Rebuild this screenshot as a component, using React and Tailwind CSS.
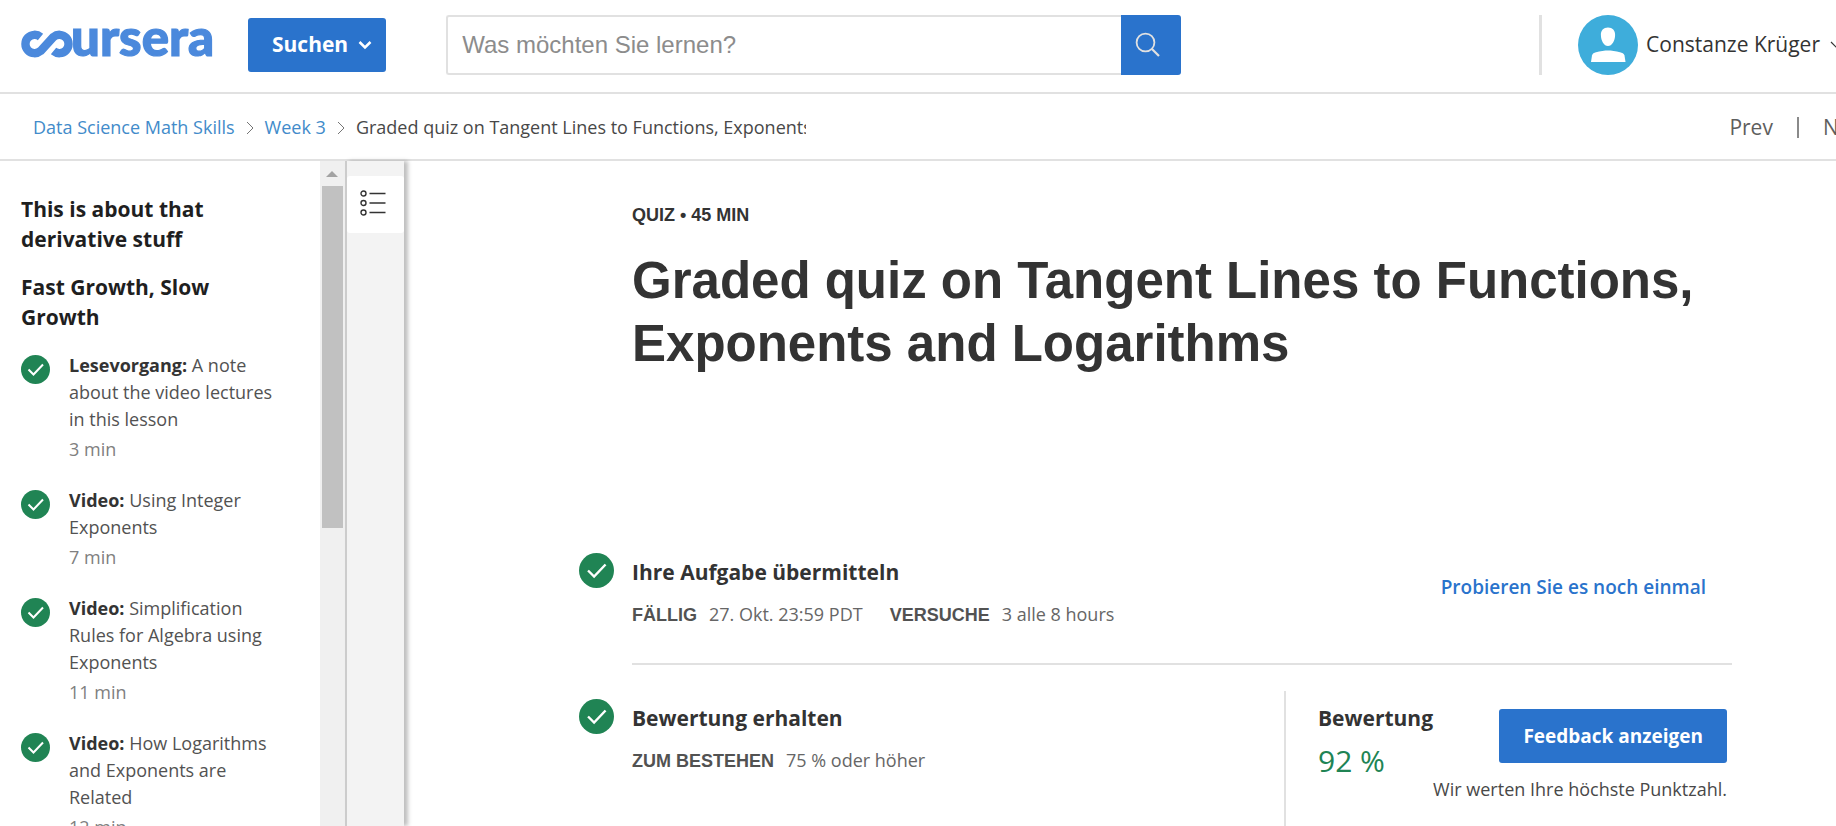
import React from "react";

const lessons = [
  { kind: "Lesevorgang:", title: "A note about the video lectures in this lesson", time: "3 min" },
  { kind: "Video:", title: "Using Integer Exponents", time: "7 min" },
  { kind: "Video:", title: "Simplification Rules for Algebra using Exponents", time: "11 min" },
  { kind: "Video:", title: "How Logarithms and Exponents are Related", time: "12 min" },
];

function CheckCircle({ className }) {
  return (
    <svg viewBox="0 0 29 29" className={className} aria-hidden="true">
      <circle cx="14.5" cy="14.5" r="14.5" fill="#208454" />
      <path d="M7.5 14.5 L12.5 19.5 L22 9.5" fill="none" stroke="#fff" strokeWidth="2" />
    </svg>
  );
}

function ChevronRight() {
  return (
    <svg viewBox="0 0 8 14" className="h-3.5 w-2 shrink-0" aria-hidden="true">
      <path d="M1 1 L7 7 L1 13" fill="none" stroke="#757575" strokeWidth="1" />
    </svg>
  );
}

function Logo() {
  return (
    <a href="#home" aria-label="coursera" className="shrink-0 text-[#4b89dc]">
      <svg viewBox="0 0 192 30" className="h-[30px] w-48 overflow-visible" aria-hidden="true">
        <path
          d="M20.500 6.900 A9.200 9.200 0 1 0 20.500 21.100 L33.500 6.900 A9.200 9.200 0 1 1 33.500 21.100"
          fill="none"
          stroke="currentColor"
          strokeWidth="8.4"
        />
        <text x="51" y="26" fill="currentColor" stroke="currentColor" strokeWidth="1.2" className="font-['Lato',sans-serif] text-[51px] font-black">
          ursera
        </text>
      </svg>
    </a>
  );
}

function Header() {
  return (
    <header className="flex h-[94px] shrink-0 items-center overflow-hidden border-b-2 border-[#e1e1e1] pb-0.5 pl-5">
      <Logo />
      <button type="button" className="ml-9 flex h-[54px] shrink-0 items-center gap-2.5 rounded-[3px] bg-[#2a73cc] px-6 pr-3.5 text-[21px] font-bold text-white">
        Suchen
        <svg viewBox="0 0 14 10" className="h-2.5 w-3.5" aria-hidden="true">
          <path d="M1.500 2 L7 7.500 L12.500 2" fill="none" stroke="currentColor" strokeWidth="2.500" />
        </svg>
      </button>
      <form className="ml-15 flex h-[60px] w-[735px]" onSubmit={(e) => e.preventDefault()}>
        <input
          type="text"
          aria-label="Was möchten Sie lernen?"
          placeholder="Was möchten Sie lernen?"
          className="min-w-0 flex-1 rounded-l-[3px] border-2 border-r-0 border-[#e1e1e1] px-3.5 font-['Liberation_Sans',sans-serif] text-[24px] text-[#333] outline-none placeholder:text-[#8c8c8c]"
        />
        <button type="submit" aria-label="Suchen" className="flex w-[60px] items-center justify-center rounded-r-[3px] bg-[#2a73cc] text-[#e1e1e1]">
          <svg viewBox="0 0 26 26" className="mr-1.5 size-[26px]" aria-hidden="true">
            <circle cx="10.500" cy="10.500" r="8.900" fill="none" stroke="currentColor" strokeWidth="1.800" />
            <path d="M17 17 L24 24" stroke="currentColor" strokeWidth="2.200" />
          </svg>
        </button>
      </form>
      <div className="-mr-2 ml-auto flex shrink-0 items-center">
        <div className="mr-9 h-[60px] w-[3px] bg-[#e1e1e1]" />
        <button type="button" className="flex items-center text-[21px] text-[#333]">
          <svg viewBox="0 0 60 60" className="mr-2 size-[60px]" aria-hidden="true">
            <circle cx="30" cy="30" r="30" fill="#3eaddb" />
            <path d="M30 12.500 C34.500 12.500 37.300 15.500 37.100 20 C37 26 34 31 30 31 C26 31 23 26 22.900 20 C22.700 15.500 25.500 12.500 30 12.500 Z" fill="#fff" />
            <path d="M13 47 L14 40.500 C14.500 38.500 16 37.700 18 37.200 C22 36.200 27 35.500 30 35.500 C33 35.500 38 36.200 42 37.200 C44 37.700 46 38.500 46.500 40.500 L47.500 47 Z" fill="#fff" />
          </svg>
          Constanze Krüger
          <svg viewBox="0 0 14 8" className="ml-2.5 h-2 w-3.5" aria-hidden="true">
            <path d="M1 1 L7 7 L13 1" fill="none" stroke="currentColor" strokeWidth="1.200" />
          </svg>
        </button>
      </div>
    </header>
  );
}

function Breadcrumbs() {
  return (
    <div className="flex h-[67px] shrink-0 items-center overflow-hidden border-b-2 border-[#e1e1e1] pt-0.5 pl-[33px] whitespace-nowrap">
      <nav aria-label="Breadcrumb" className="flex items-center gap-[11px] text-[18px] text-[#484848]">
        <a href="#course" className="text-[#428bca]">Data Science Math Skills</a>
        <ChevronRight />
        <a href="#week-3" className="text-[#428bca]">Week 3</a>
        <ChevronRight />
        <span className="w-[450px] overflow-hidden">Graded quiz on Tangent Lines to Functions, Exponents and Logarithms</span>
      </nav>
      <div className="-mr-[33px] ml-auto flex shrink-0 items-center gap-6 text-[21px] text-[#5e5e5e]">
        <a href="#prev">Prev</a>
        <div className="h-[21px] w-0.5 bg-[#8a8a8a]" />
        <a href="#next">Next</a>
      </div>
    </div>
  );
}

function Sidebar() {
  return (
    <aside className="flex shrink-0">
      <div className="w-[320px] overflow-hidden pt-[33px] pr-10 pl-[21px]">
        <h2 className="mb-[18px] text-[21px] leading-[30px] font-bold text-[#1f1f1f]">This is about that derivative stuff</h2>
        <h2 className="mb-5 text-[21px] leading-[30px] font-bold text-[#1f1f1f]">Fast Growth, Slow Growth</h2>
        <ul className="flex flex-col gap-6 text-[18px] leading-[27px]">
          {lessons.map((l) => (
            <li key={l.title}>
              <a href="#lesson" className="flex items-start gap-[19px]">
                <CheckCircle className="mt-[3px] size-[29px] shrink-0" />
                <span className="flex flex-col gap-[3px] text-[#525252]">
                  <span>
                    <strong className="font-bold text-[#333]">{l.kind}</strong> {l.title}
                  </span>
                  <span className="text-[#808080]">{l.time}</span>
                </span>
              </a>
            </li>
          ))}
        </ul>
      </div>
      <div className="flex w-[25px] flex-col items-center bg-[#f0f0f0] pr-px" aria-hidden="true">
        <svg viewBox="0 0 12 6" className="mt-2.5 mb-[9px] h-1.5 w-3">
          <path d="M0 6 L6 0 L12 6 Z" fill="#a3a3a3" />
        </svg>
        <div className="h-[342px] w-[21px] bg-[#c1c1c1]" />
      </div>
      <div className="w-[59px] border-l-2 border-[#ccc] bg-[#f3f3f3] pt-[15px] shadow-[4px_0_4px_rgba(0,0,0,0.25)]">
        <button type="button" aria-label="Menü" className="flex h-[57px] w-full items-center justify-center rounded-[3px] bg-white pr-1.5 pb-1">
          <svg viewBox="0 0 26 26" className="size-[26px]" fill="none" stroke="#333" aria-hidden="true">
            <g strokeWidth="1.400">
              <circle cx="3.500" cy="3.500" r="2.500" />
              <circle cx="3.500" cy="13" r="2.500" />
              <circle cx="3.500" cy="22.500" r="2.500" />
            </g>
            <path d="M9.500 3.500 H25.500 M9.500 13 H25.500 M9.500 22.500 H25.500" strokeWidth="1.400" />
          </svg>
        </button>
      </div>
    </aside>
  );
}

function Label({ children }) {
  return <span className="font-['Liberation_Sans',sans-serif] text-[18px] font-bold text-[#525252]">{children}</span>;
}

function Main() {
  return (
    <main className="min-w-0 flex-1 overflow-hidden pt-[41px] pr-[104px] pl-[175px]">
      <div className="pl-[53px] font-['Liberation_Sans',sans-serif] font-bold text-[#333]">
        <p className="text-[18px] leading-[27px]">QUIZ • 45 MIN</p>
        <h1 className="mt-5 text-[51px] leading-[63px]">Graded quiz on Tangent Lines to Functions, Exponents and Logarithms</h1>
      </div>

      <section className="mt-[178px] flex">
        <CheckCircle className="mr-[18px] size-[35px] shrink-0" />
        <div className="flex h-[112px] flex-1 items-start border-b-2 border-[#e1e1e1]">
          <div className="pt-1">
            <h3 className="text-[21px] leading-[30px] font-bold text-[#333]">Ihre Aufgabe übermitteln</h3>
            <p className="mt-3.5 flex items-baseline gap-[27px] text-[18px] leading-[27px] text-[#666]">
              <span className="flex items-baseline gap-3"><Label>FÄLLIG</Label>27. Okt. 23:59 PDT</span>
              <span className="flex items-baseline gap-3"><Label>VERSUCHE</Label>3 alle 8 hours</span>
            </p>
          </div>
          <button type="button" className="mt-5 mr-[26px] ml-auto text-[19px] leading-7 font-semibold text-[#2a73cc]">Probieren Sie es noch einmal</button>
        </div>
      </section>

      <section className="flex pt-[26px]">
        <CheckCircle className="mt-2 mr-[18px] size-[35px] shrink-0" />
        <div className="flex flex-1">
          <div className="flex-1 pt-3">
            <h3 className="text-[21px] leading-[30px] font-bold text-[#333]">Bewertung erhalten</h3>
            <p className="mt-3.5 flex items-baseline gap-3 text-[18px] leading-[27px] text-[#666]">
              <Label>ZUM BESTEHEN</Label>75 % oder höher
            </p>
          </div>
          <div className="flex h-[180px] w-[448px] border-l-2 border-[#e1e1e1] pr-[5px] pl-8">
            <div className="w-0 pt-3 whitespace-nowrap">
              <h3 className="text-[21px] leading-[30px] font-bold text-[#333]">Bewertung</h3>
              <p className="text-[30px] leading-[56px] text-[#208454]">92 %</p>
            </div>
            <div className="ml-auto flex flex-col items-end pt-[18px]">
              <button type="button" className="h-[54px] rounded-[3px] bg-[#2a73cc] px-6 text-[19px] font-bold text-white">Feedback anzeigen</button>
              <p className="mt-[13px] text-[18px] leading-[27px] text-[#484848]">Wir werten Ihre höchste Punktzahl.</p>
            </div>
          </div>
        </div>
      </section>
    </main>
  );
}

export default function App() {
  return (
    <div className="flex h-screen flex-col overflow-hidden bg-white font-['Open_Sans',sans-serif]">
      <Header />
      <Breadcrumbs />
      <div className="flex min-h-0 flex-1">
        <Sidebar />
        <Main />
      </div>
    </div>
  );
}
